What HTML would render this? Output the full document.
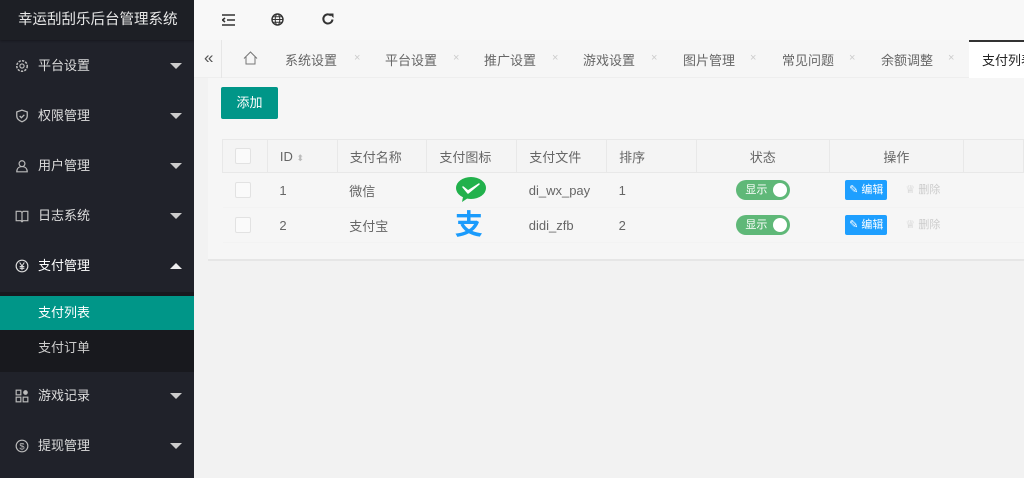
<!DOCTYPE html>
<html><head><meta charset="utf-8"><style>
*{margin:0;padding:0;box-sizing:border-box}
body{width:1024px;height:478px;overflow:hidden;font-family:"Liberation Sans","Noto Sans CJK SC",sans-serif;background:#f2f2f2;position:relative;font-size:13px;color:#555}
.side{position:absolute;left:0;top:0;width:194px;height:478px;background:#20222a;color:#ddd}
.logo{height:40px;background:#1d1f25;color:#e8e8e8;font-size:14.5px;line-height:40px;padding-left:18px;white-space:nowrap;box-shadow:0 1px 2px rgba(0,0,0,.3)}
.mi{position:absolute;left:0;width:194px;height:20px;line-height:20px;font-size:13px;color:#ddd}
.mi .ic{position:absolute;left:15px;top:3px;width:14px;height:14px}
.mi .t{position:absolute;left:38px}
.mi .ar{position:absolute;left:170px;top:7px;border-left:6px solid transparent;border-right:6px solid transparent;border-top:6px solid #ccc}
.mi .up{border-top:0;border-bottom:6px solid #eee}
.sub{position:absolute;left:0;top:292px;width:194px;height:80px;background:#18191e}
.act{position:absolute;left:0;top:296px;width:194px;height:34px;background:#009688}
.head{position:absolute;left:194px;top:0;right:0;height:40px;background:#f8f8f8}
.tabs{position:absolute;left:194px;top:40px;right:0;height:38px;background:#f6f6f6;border-bottom:1px solid #eee;white-space:nowrap}
.tab{position:absolute;top:10px;font-size:13px;color:#666;white-space:nowrap}
.x{position:absolute;top:12px;font-size:11px;color:#ccc}
.card{position:absolute;left:208px;top:78px;right:0;height:183px;background:#f6f6f6;border-bottom:2px solid #e6e6e6}
.btn{position:absolute;left:221px;top:87px;width:57px;height:32px;background:#009688;color:#fff;border-radius:2px;text-align:center;line-height:32px;font-size:13px}
table{position:absolute;left:222px;top:139px;border-collapse:collapse;font-size:13px;color:#666}
td{height:35px;border-bottom:1px solid #f3f3f3;padding-left:12px}
thead td{height:33px;border:1px solid #e8e8e8;background:#f4f4f4;color:#666}
.cb{display:inline-block;width:16px;height:16px;border:1px solid #e2e2e2;background:#fafafa;border-radius:2px;vertical-align:middle}
.sw{display:inline-block;width:54px;height:20px;border-radius:10px;background:#5fb878;color:#fff;font-size:11px;line-height:20px;padding-left:9px;position:relative;vertical-align:middle}
.sw:after{content:"";position:absolute;right:3px;top:3px;width:14px;height:14px;border-radius:50%;background:#fff}
.ed{display:inline-block;background:#1e9fff;color:#fff;font-size:11px;height:20px;line-height:20px;padding:0 4px;border-radius:2px;vertical-align:middle}
.del{color:#ccc;font-size:11px;margin-left:18px}
</style></head><body>
<div class="side">
<div class="logo">幸运刮刮乐后台管理系统</div>
<div class="mi" style="top:56px"><svg class="ic" viewBox="0 0 12 12"><circle cx="6" cy="6" r="4.5" fill="none" stroke="#bbb" stroke-width="1.3" stroke-dasharray="2 1"/><circle cx="6" cy="6" r="1.8" fill="none" stroke="#bbb"/></svg><span class="t">平台设置</span><span class="ar"></span></div>
<div class="mi" style="top:106px"><svg class="ic" viewBox="0 0 12 12"><path d="M6 1L1.5 2.5V6c0 2.5 2 4 4.5 5 2.5-1 4.5-2.5 4.5-5V2.5z M4 6l1.5 1.5L8 5" fill="none" stroke="#bbb" stroke-width="1.1"/></svg><span class="t">权限管理</span><span class="ar"></span></div>
<div class="mi" style="top:156px"><svg class="ic" viewBox="0 0 12 12"><circle cx="6" cy="4" r="2.5" fill="none" stroke="#bbb"/><path d="M1.5 11c0-3 2-4.5 4.5-4.5S10.5 8 10.5 11z" fill="none" stroke="#bbb"/></svg><span class="t">用户管理</span><span class="ar"></span></div>
<div class="mi" style="top:206px"><svg class="ic" viewBox="0 0 12 12"><path d="M1 2h4l1 1 1-1h4v8H7L6 11 5 10H1zM6 3v8" fill="none" stroke="#bbb"/></svg><span class="t">日志系统</span><span class="ar"></span></div>
<div class="mi" style="top:256px"><svg class="ic" viewBox="0 0 12 12"><circle cx="6" cy="6" r="5" fill="none" stroke="#ddd"/><path d="M4 3l2 3 2-3M6 6v3.5M4 6.5h4M4 8h4" fill="none" stroke="#ddd" stroke-width=".9"/></svg><span class="t" style="color:#fff">支付管理</span><span class="ar up"></span></div>
<div class="sub"></div><div class="act"></div>
<div class="mi" style="top:303px"><span class="t" style="color:#fff">支付列表</span></div>
<div class="mi" style="top:338px"><span class="t" style="color:#ccc">支付订单</span></div>
<div class="mi" style="top:386px"><svg class="ic" viewBox="0 0 12 12"><rect x="1" y="1" width="4" height="4" fill="none" stroke="#bbb"/><rect x="1" y="7" width="4" height="4" fill="none" stroke="#bbb"/><rect x="7" y="7" width="4" height="4" fill="none" stroke="#bbb"/><circle cx="9" cy="3" r="2" fill="#bbb"/></svg><span class="t">游戏记录</span><span class="ar"></span></div>
<div class="mi" style="top:436px"><svg class="ic" viewBox="0 0 12 12"><circle cx="6" cy="6" r="5" fill="none" stroke="#bbb"/><text x="6" y="9" font-size="8" text-anchor="middle" fill="#bbb" font-family="Liberation Sans">$</text></svg><span class="t">提现管理</span><span class="ar"></span></div>
</div>
<div class="head">
<svg style="position:absolute;left:28px;top:14px" width="13" height="12" viewBox="0 0 13 12"><path d="M0 1h13M5 6h8M0 11h13M3 4L0.5 6 3 8" fill="none" stroke="#333" stroke-width="1.6"/></svg>
<svg style="position:absolute;left:77px;top:13px" width="13" height="13" viewBox="0 0 13 13"><circle cx="6.5" cy="6.5" r="5.5" fill="none" stroke="#333" stroke-width="1.4"/><ellipse cx="6.5" cy="6.5" rx="2.3" ry="5.5" fill="none" stroke="#333"/><path d="M1 6.5h11M2 3.8h9M2 9.2h9" stroke="#333"/></svg>
<svg style="position:absolute;left:127px;top:12px" width="14" height="14" viewBox="0 0 14 14"><path d="M11.5 7.5A4.6 4.6 0 1 1 10 3.5" fill="none" stroke="#333" stroke-width="2"/><path d="M8 1.5h4.5V6z" fill="#333"/></svg>
</div>
<div class="tabs">
<span style="position:absolute;left:10px;top:8px;font-size:17px;color:#555">«</span>
<div style="position:absolute;left:0;top:0;width:28px;height:38px;border-right:1px solid #e6e6e6"></div>
<svg style="position:absolute;left:49px;top:11px" width="15" height="14" viewBox="0 0 15 14"><path d="M1 7.5L7.5 1 14 7.5M3 6v7h9V6" fill="none" stroke="#777"/></svg>
<span class="tab" style="left:91px">系统设置</span><span class="x" style="left:160px">×</span>
<span class="tab" style="left:191px">平台设置</span><span class="x" style="left:259px">×</span>
<span class="tab" style="left:290px">推广设置</span><span class="x" style="left:358px">×</span>
<span class="tab" style="left:389px">游戏设置</span><span class="x" style="left:457px">×</span>
<span class="tab" style="left:489px">图片管理</span><span class="x" style="left:556px">×</span>
<span class="tab" style="left:588px">常见问题</span><span class="x" style="left:655px">×</span>
<span class="tab" style="left:687px">余额调整</span><span class="x" style="left:754px">×</span>
<div style="position:absolute;left:775px;top:0;right:0;height:38px;background:#fff;border-top:2px solid #333"></div>
<span class="tab" style="left:788px;color:#222">支付列表</span>
</div>
<div class="card"></div>
<div class="btn">添加</div>
<table>
<thead><tr><td style="width:45px;padding-left:12px"><span class="cb"></span></td><td style="width:70px">ID <span style="color:#bbb;font-size:9px">⬍</span></td><td style="width:90px">支付名称</td><td style="width:90px">支付图标</td><td style="width:90px">支付文件</td><td style="width:90px">排序</td><td style="width:133px;text-align:center;padding:0">状态</td><td style="width:135px;text-align:center;padding:0">操作</td><td style="width:60px"></td></tr></thead>
<tr><td><span class="cb"></span></td><td>1</td><td>微信</td><td style="padding-left:28px"><svg width="32" height="26" viewBox="0 0 32 26"><ellipse cx="16" cy="12" rx="15" ry="11" fill="#22b14c"/><path d="M8 21l-1 5 6-4z" fill="#22b14c"/><path d="M8 11l5 4 11-7-11 9z" fill="#fff" stroke="#fff" stroke-width="1.5" stroke-linejoin="round"/></svg></td><td>di_wx_pay</td><td>1</td><td style="padding-left:40px"><span class="sw">显示</span></td><td style="padding-left:16px"><span class="ed">✎ 编辑</span><span class="del">♕ 删除</span></td><td></td></tr>
<tr><td><span class="cb"></span></td><td>2</td><td>支付宝</td><td style="padding-left:28px"><span style="color:#1a9bfc;font-size:28px;font-weight:bold;line-height:28px">支</span></td><td>didi_zfb</td><td>2</td><td style="padding-left:40px"><span class="sw">显示</span></td><td style="padding-left:16px"><span class="ed">✎ 编辑</span><span class="del">♕ 删除</span></td><td></td></tr>
</table>
</body></html>
